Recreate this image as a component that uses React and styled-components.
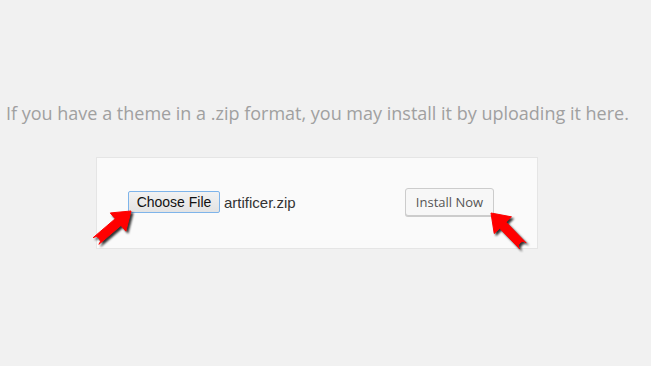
import React from "react";
import styled, { createGlobalStyle } from "styled-components";

const Global = createGlobalStyle`
  html, body { margin: 0; padding: 0; background: #f1f1f1; }
  body { width: 651px; height: 366px; overflow: hidden; }
`;

const Page = styled.div`
  display: flex;
  flex-direction: column;
  align-items: flex-start;
  padding-top: 96px;
`;

const Intro = styled.p`
  margin: 0 0 0 6px;
  font-family: "Open Sans", sans-serif;
  font-size: 18px;
  line-height: 34px;
  color: #a0a0a0;
  white-space: nowrap;
`;

const Card = styled.div`
  position: relative;
  box-sizing: border-box;
  width: 442px;
  margin: 27px 0 0 96px;
  padding: 30px 43px 32px 31px;
  display: flex;
  align-items: center;
  justify-content: space-between;
  background: #fafafa;
  border: 1px solid #e5e5e5;
`;

const FileGroup = styled.div`
  display: flex;
  align-items: center;
  gap: 4px;
`;

const ChooseButton = styled.button`
  box-sizing: border-box;
  width: 92px;
  height: 22px;
  padding: 0;
  border: 1px solid #7eb4ea;
  border-radius: 2px;
  background: linear-gradient(#f2f2f2, #e3e3e3);
  font-family: "Liberation Sans", Arial, sans-serif;
  font-size: 14px;
  color: #111;
`;

const FileName = styled.span`
  font-family: "Liberation Sans", Arial, sans-serif;
  font-size: 15px;
  color: #333;
`;

const InstallButton = styled.button`
  box-sizing: border-box;
  width: 89px;
  height: 28px;
  padding: 0;
  border: 1px solid #cccccc;
  border-radius: 3px;
  background: #f7f7f7;
  box-shadow: 0 1px 0 #ccc;
  font-family: "Open Sans", sans-serif;
  font-size: 13px;
  color: #555;
`;

const ArrowSvg = styled.svg`
  position: absolute;
  left: 0;
  top: 0;
  width: 100%;
  height: 100%;
  overflow: visible;
  pointer-events: none;
  filter: drop-shadow(2px 2px 1.2px rgba(0, 0, 0, 0.8));
`;

function arrowPath([tx, ty], [sx, sy], headLen, headHalf, shaftHalf) {
  const dx = tx - sx;
  const dy = ty - sy;
  const len = Math.hypot(dx, dy);
  const ux = dx / len;
  const uy = dy / len;
  const nx = -uy;
  const ny = ux;
  const bx = tx - ux * headLen;
  const by = ty - uy * headLen;
  const p = (x, y) => `${x.toFixed(2)},${y.toFixed(2)}`;
  return [
    `M${p(sx + nx * shaftHalf, sy + ny * shaftHalf)}`,
    `L${p(bx + nx * shaftHalf, by + ny * shaftHalf)}`,
    `L${p(bx + nx * headHalf, by + ny * headHalf)}`,
    `L${p(tx, ty)}`,
    `L${p(bx - nx * headHalf, by - ny * headHalf)}`,
    `L${p(bx - nx * shaftHalf, by - ny * shaftHalf)}`,
    `L${p(sx - nx * shaftHalf, sy - ny * shaftHalf)}`,
    `A${shaftHalf},${shaftHalf} 0 0 1 ${p(sx + nx * shaftHalf, sy + ny * shaftHalf)}`,
    "Z",
  ].join(" ");
}

function Arrow({ tip, tail }) {
  return (
    <ArrowSvg>
      <path
        d={arrowPath(tip, tail, 17, 12, 4.4)}
        fill="#ff0000"
        stroke="#ff0000"
        strokeWidth="1"
        strokeLinejoin="round"
      />
    </ArrowSvg>
  );
}

export default function App() {
  return (
    <>
      <Global />
      <Page>
        <Intro>If you have a theme in a .zip format, you may install it by uploading it here.</Intro>
        <Card>
          <FileGroup>
            <ChooseButton>Choose File</ChooseButton>
            <FileName>artificer.zip</FileName>
          </FileGroup>
          <InstallButton>Install Now</InstallButton>
          <Arrow tip={[34, 53]} tail={[-1, 83]} />
          <Arrow tip={[394, 55]} tail={[426, 88]} />
        </Card>
      </Page>
    </>
  );
}
